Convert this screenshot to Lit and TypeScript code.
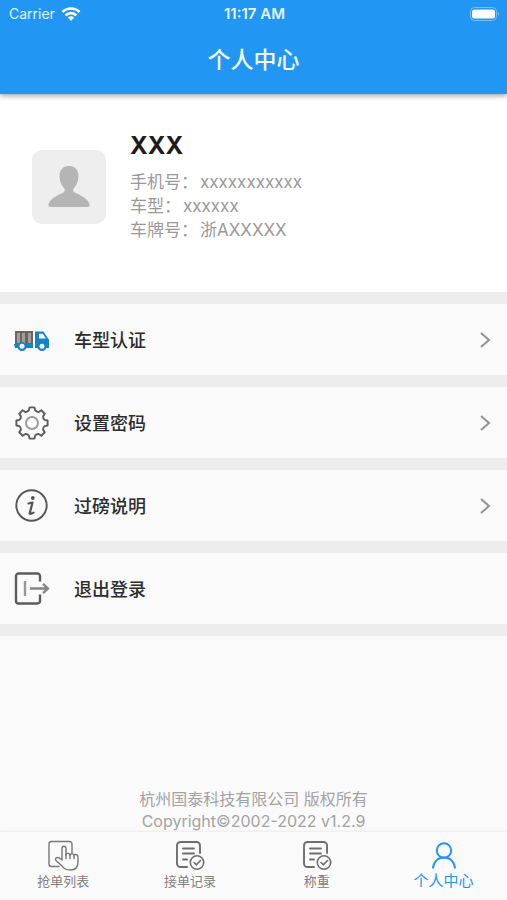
import { LitElement, html, css, svg, nothing } from "lit";
import { customElement, property } from "lit/decorators.js";
import { classMap } from "lit/directives/class-map.js";

const truck = svg`
  <svg width="36" height="36" viewBox="0 0 36 36" fill="none" aria-hidden="true">
    <path d="M1 9h18v14H1z" fill="#6b6562"/>
    <path d="M3 11h3v10H3zM8 11h3v10H8zM14 11h3v10h-3z" fill="#a39e9b"/>
    <path d="M0 22h19v4H1z" fill="#1583c4"/>
    <path d="M21 9.500h8.500l3.500 5.500 2 2.500V26H21z" fill="#1583c4"/>
    <path d="M25 11.700h3.800l3 4.800H25z" fill="#fafafa"/>
    <circle cx="8" cy="24.500" r="4.600" fill="#1583c4"/>
    <circle cx="28" cy="24.500" r="4.600" fill="#1583c4"/>
    <circle cx="8" cy="24.300" r="2.500" fill="#fafafa"/>
    <circle cx="28" cy="24.300" r="2.500" fill="#fafafa"/>
  </svg>`;

/** Closed outline of a cog with eight square teeth, centred on (18, 18). */
const gearOutline = () => {
  const at = (radius: number, degrees: number) => {
    const a = (degrees * Math.PI) / 180;
    return `${(18 + radius * Math.cos(a)).toFixed(2)} ${(18 + radius * Math.sin(a)).toFixed(2)}`;
  };
  const teeth = Array.from({ length: 8 }, (_, i) => {
    const c = i * 45;
    return `${at(12.9, c - 14)}L${at(15.8, c - 9)}L${at(15.8, c + 9)}L${at(12.9, c + 14)}Q${at(11.8, c + 22.5)} `;
  });
  return `M${teeth.join("")}${at(12.9, -14)}Z`;
};

const gear = svg`
  <svg width="36" height="36" viewBox="0 0 36 36" fill="none" aria-hidden="true">
    <path stroke="#5c5c5c" stroke-width="1.9" stroke-linejoin="round" d=${gearOutline()}/>
    <circle cx="18" cy="18" r="6" stroke="#999" stroke-width="1.9"/>
  </svg>`;

const info = svg`
  <svg width="36" height="36" viewBox="0 0 36 36" fill="none" aria-hidden="true">
    <circle cx="17.500" cy="17.500" r="15.200" stroke="#555" stroke-width="1.900"/>
    <circle cx="18.800" cy="10" r="1.900" fill="#555"/>
    <path d="M14.500 15.500l4-1-2.500 9.800c-.4 2 1 2.200 3.500.4M15.500 25.500h2" stroke="#555" stroke-width="2.200" stroke-linecap="round" stroke-linejoin="round"/>
  </svg>`;

const logout = svg`
  <svg width="36" height="36" viewBox="0 0 36 36" fill="none" aria-hidden="true">
    <path d="M26 10.500V5a2.500 2.500 0 0 0-2.500-2.500h-19A2.500 2.500 0 0 0 2 5v25a2.500 2.500 0 0 0 2.500 2.500h19A2.500 2.500 0 0 0 26 30v-6.500" stroke="#5c5c5c" stroke-width="2.400"/>
    <path d="M11 10v15" stroke="#999" stroke-width="2.400"/>
    <path d="M16 17.500h18M29 12.800l5 4.700-5 4.700" stroke="#858585" stroke-width="2.400"/>
  </svg>`;

const tapList = svg`
  <svg width="32" height="32" viewBox="0 0 32 32" fill="none" stroke="#777" stroke-width="1.400" stroke-linecap="round" stroke-linejoin="round" aria-hidden="true">
    <path d="M25 14V4a2.500 2.500 0 0 0-2.500-2.500h-18A2.500 2.500 0 0 0 2 4v20a2.500 2.500 0 0 0 2.500 2.500H12"/>
    <path fill="#fafafa" d="M15 20V8.500c0-3 4-3 4 0V15c0-2.200 4-2.200 4 .300 0-2 4-2 4 .400 0-2 4-1.500 4 1.300V22c0 5-2.500 8-7.500 8-4.500 0-7-1.500-8.500-4l-6-5.500c-1.500-2 .5-3.500 2.500-2.800z"/>
    <path d="M19 15v3.500M23 15.500v3M27 16v2.500"/>
  </svg>`;

const checkedList = svg`
  <svg width="32" height="32" viewBox="0 0 32 32" fill="none" stroke="#6e6e6e" stroke-width="1.900" stroke-linecap="round" stroke-linejoin="round" aria-hidden="true">
    <path d="M13 27H6.500A3.500 3.500 0 0 1 3 23.500v-18A3.500 3.500 0 0 1 6.500 2h16A3.500 3.500 0 0 1 26 5.500V13"/>
    <path d="M9 8.500h11M9 13.500h11M9 19.500h4"/>
    <circle cx="23" cy="22.500" r="6.700" fill="#fafafa" stroke-width="1.600"/>
    <path d="M20 22.500l2.500 2.300 4-4.300" stroke-width="1.600"/>
  </svg>`;

const person = svg`
  <svg width="32" height="32" viewBox="0 0 32 32" fill="none" stroke="#2196f3" stroke-width="2" aria-hidden="true">
    <circle cx="16" cy="10.500" r="7.200"/>
    <path d="M5 28.500c.5-7 5-11 11-11s10.500 4 11 11"/>
  </svg>`;

const chevron = svg`
  <svg width="12" height="18" viewBox="0 0 12 18" fill="none" aria-hidden="true">
    <path d="M2 2l8 7-8 7" stroke="#929292" stroke-width="2"/>
  </svg>`;

@customElement("status-bar")
class StatusBar extends LitElement {
  static styles = css`
    :host {
      display: grid;
      grid-template-columns: 1fr auto 1fr;
      align-items: center;
      height: 27px;
      padding: 0 7px 0 9px;
      font-size: 14px;
      color: #e3f4ff;
    }
    .carrier { display: flex; align-items: center; gap: 6px; }
    .time { font-size: 15px; font-weight: 600; }
    .battery { justify-self: end; }
  `;
  render() {
    return html`
      <span class="carrier">Carrier
        <svg width="20" height="16" viewBox="0 0 20 16" fill="none" stroke="#fff" stroke-width="2.600" aria-hidden="true">
          <path d="M1.500 6a12 12 0 0 1 17 0M4.600 9.400a7.600 7.600 0 0 1 10.800 0"/>
          <path d="M10 15l-3.200-3.400a4.600 4.600 0 0 1 6.400 0z" fill="#fff" stroke="none"/>
        </svg>
      </span>
      <span class="time">11:17 AM</span>
      <svg class="battery" width="31" height="16" viewBox="0 0 31 16" aria-hidden="true">
        <rect x="1.500" y="1.500" width="26" height="13" rx="4" fill="none" stroke="#7cc0f8"/>
        <rect x="3" y="3.500" width="23" height="9" rx="2.500" fill="#fff"/>
        <path d="M29 6q2 2 0 4z" fill="#7cc0f8"/>
      </svg>`;
  }
}

@customElement("menu-row")
class MenuRow extends LitElement {
  @property() label = "";
  @property({ attribute: false }) icon: unknown = nothing;
  @property({ type: Boolean }) arrow = false;
  static styles = css`
    :host { display: block; background: #fafafa; }
    button {
      display: flex;
      align-items: center;
      gap: 24px;
      width: 100%;
      min-height: 71px;
      padding: 0 16px 0 14px;
      border: 0;
      background: none;
      font: inherit;
      font-size: 18px;
      font-weight: 500;
      color: #2c2c2c;
      text-align: left;
      cursor: pointer;
    }
    svg { display: block; flex: none; }
    .label { flex: 1; padding-bottom: 2px; }
  `;
  render() {
    return html`<button type="button">
      ${this.icon}<span class="label">${this.label}</span>${this.arrow ? chevron : nothing}
    </button>`;
  }
}

@customElement("app-root")
class AppRoot extends LitElement {
  private rows = [
    { label: "车型认证", icon: truck, arrow: true },
    { label: "设置密码", icon: gear, arrow: true },
    { label: "过磅说明", icon: info, arrow: true },
    { label: "退出登录", icon: logout, arrow: false },
  ];
  private details = [
    ["手机号", "xxxxxxxxxxx"],
    ["车型", "xxxxxx"],
    ["车牌号", "浙AXXXXX"],
  ];
  private tabs = [
    { label: "抢单列表", icon: tapList, active: false },
    { label: "接单记录", icon: checkedList, active: false },
    { label: "称重", icon: checkedList, active: false },
    { label: "个人中心", icon: person, active: true },
  ];

  static styles = css`
    :host {
      display: flex;
      flex-direction: column;
      min-height: 100vh;
      background: #fafafa;
      font-family: Inter, "Noto Sans CJK SC", sans-serif;
    }
    header {
      position: relative;
      background: #2196f3;
      box-shadow: 0 2px 5px rgba(0, 0, 0, 0.35);
    }
    h1 {
      margin: 0;
      padding-bottom: 1px;
      font-size: 23px;
      font-weight: 500;
      line-height: 66px;
      text-align: center;
      color: #f4fcff;
    }
    .profile {
      display: flex;
      align-items: flex-start;
      gap: 24px;
      min-height: 161px;
      padding: 37px 32px 0;
      background: #fff;
    }
    .avatar {
      flex: none;
      margin-top: 19px;
      border-radius: 10px;
      background: #eee;
    }
    h2 {
      margin: 0 0 9px;
      font-size: 24px;
      font-weight: 700;
      line-height: 30px;
      color: #1c1c1c;
    }
    .details {
      margin: 0;
      font-size: 17px;
      line-height: 24px;
      color: #999;
    }
    .details div { display: flex; gap: 2px; }
    dt, dd { margin: 0; }
    .menu {
      display: grid;
      gap: 12px;
      padding: 12px 0;
      background: #ededed;
    }
    footer {
      margin-top: auto;
      padding-top: 16px;
      font-size: 16px;
      line-height: 22px;
      text-align: center;
      color: #a3a3a3;
    }
    footer p { margin: 0; }
    nav {
      display: grid;
      grid-template-columns: repeat(4, 1fr);
      min-height: 68px;
      box-shadow: 0 -1px 2px rgba(0, 0, 0, 0.06);
    }
    .tab {
      display: flex;
      flex-direction: column;
      align-items: center;
      padding-top: 8px;
      font-size: 13px;
      line-height: 18px;
      color: #808080;
      text-decoration: none;
    }
    .tab.active { font-size: 15px; color: #2196f3; }
  `;

  render() {
    return html`
      <header>
        <status-bar></status-bar>
        <h1>个人中心</h1>
      </header>
      <main>
        <section class="profile">
          <svg class="avatar" width="74" height="74" viewBox="0 0 74 74" role="img" aria-label="头像">
            <path fill="#b5b5b5" d="M37 16c6 0 9.500 4 9.500 10 0 5.500-2 9-4.500 12-1.500 2-1 4 1.500 5 5 2.200 8.500 4 11 6.500 1.800 1.800 3 3.500 3 5.500 0 1.500-.6 2-2 2h-37c-1.400 0-2-.5-2-2 0-2 1.200-3.700 3-5.500 2.500-2.500 6-4.300 11-6.500 2.500-1 3-3 1.500-5-2.500-3-4.500-6.500-4.500-12 0-6 3.500-10 9.500-10z"/>
          </svg>
          <div>
            <h2>XXX</h2>
            <dl class="details">
              ${this.details.map(([k, v]) => html`<div><dt>${k}：</dt><dd>${v}</dd></div>`)}
            </dl>
          </div>
        </section>
        <section class="menu">
          ${this.rows.map((r) => html`<menu-row .label=${r.label} .icon=${r.icon} .arrow=${r.arrow}></menu-row>`)}
        </section>
      </main>
      <footer>
        <p>杭州国泰科技有限公司 版权所有</p>
        <p>Copyright©2002-2022 v1.2.9</p>
      </footer>
      <nav>
        ${this.tabs.map((t) => html`<a href="#" class=${classMap({ tab: true, active: t.active })}>${t.icon}<span>${t.label}</span></a>`)}
      </nav>`;
  }
}
